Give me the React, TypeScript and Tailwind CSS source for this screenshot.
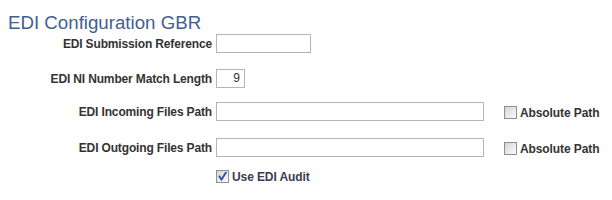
const Label = ({ children }: { children: string }) => (
  <div className="w-[212px] shrink-0 text-right text-[12px] leading-[16px] font-bold tracking-[-0.15px] text-[#333333]">
    {children}
  </div>
);

const TextBox = ({ width, value = '' }: { width: string; value?: string }) => (
  <div
    className={`ml-[4px] h-[19px] ${width} border border-[#b5b5b5] bg-white text-right text-[12px] leading-[17px] pr-[4px] text-[#333333]`}
  >
    {value}
  </div>
);

const CheckBox = ({ checked = false }: { checked?: boolean }) => (
  <span className="relative inline-block h-[13px] w-[13px] shrink-0 border border-[#8f8f8f] bg-gradient-to-br from-[#d6d6d6] to-[#fbfbfb]">
    {checked && (
      <svg
        viewBox="0 0 11 11"
        className="absolute left-0 top-0 h-[11px] w-[11px]"
        fill="none"
      >
        <path
          d="M2.5 5.5 L4.5 8.5 L8.8 1.8"
          stroke="#2a4f9e"
          strokeWidth="1.8"
          strokeLinecap="square"
        />
      </svg>
    )}
  </span>
);

const PathRow = ({ label, className }: { label: string; className: string }) => (
  <div className={`flex h-[19px] items-center ${className}`}>
    <Label>{label}</Label>
    <TextBox width="w-[268px]" />
    <div className="ml-[20px] flex translate-y-[1px] items-center gap-[3px]">
      <CheckBox />
      <span className="text-[12px] leading-[16px] font-bold tracking-[-0.1px] text-[#333333]">
        Absolute Path
      </span>
    </div>
  </div>
);

export default function App() {
  return (
    <div className="h-[200px] w-[612px] bg-white font-['Liberation_Sans',Arial,sans-serif]">
      <div className="h-[34px] pt-[12px] pl-[8px] text-[18.7px] leading-[22px] text-[#3f5f91]">
        EDI Configuration GBR
      </div>
      <div className="flex h-[19px] items-center">
        <Label>EDI Submission Reference</Label>
        <TextBox width="w-[95px]" />
      </div>
      <div className="mt-[16px] flex h-[19px] items-center">
        <Label>EDI NI Number Match Length</Label>
        <TextBox width="w-[29px]" value="9" />
      </div>
      <PathRow label="EDI Incoming Files Path" className="mt-[14px]" />
      <PathRow label="EDI Outgoing Files Path" className="mt-[17px]" />
      <div className="mt-[13px] ml-[216px] flex h-[13px] items-center gap-[3px]">
        <CheckBox checked />
        <span className="text-[12px] leading-[16px] font-bold tracking-[-0.1px] text-[#3a3d4f]">
          Use EDI Audit
        </span>
      </div>
    </div>
  );
}
